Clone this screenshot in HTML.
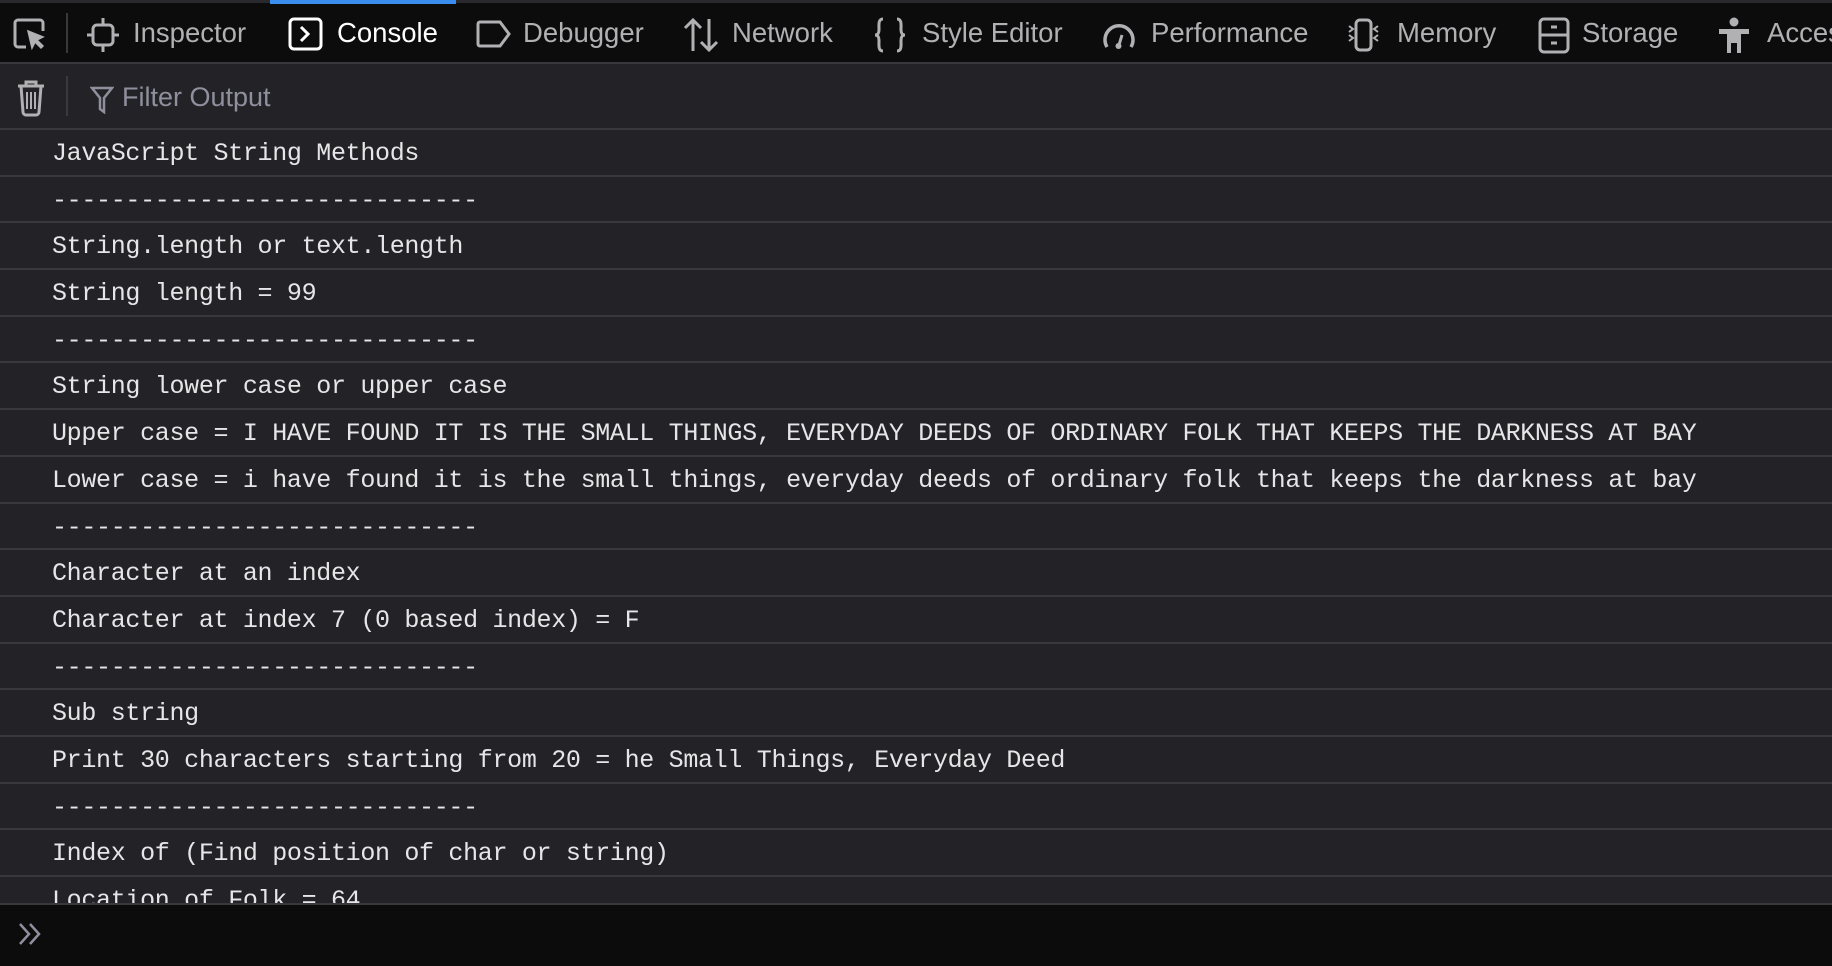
<!DOCTYPE html>
<html><head><meta charset="utf-8"><style>
*{margin:0;padding:0;box-sizing:border-box}
body{width:1832px;height:966px;background:#232327;overflow:hidden;position:relative;font-family:"Liberation Sans",sans-serif}
.tb{position:absolute;left:0;top:0;width:1832px;height:64px;background:#0c0c0d;border-top:3px solid #2a2a2e;border-bottom:2px solid #38383d}
.t{position:absolute;top:14px;font-size:27.5px;color:#b1b1b3;line-height:32px;white-space:nowrap}
.ic{position:absolute;top:14px}
.fb{position:absolute;left:0;top:64px;width:1832px;height:66px;background:#232327;border-bottom:2px solid #38383d}
.rows{position:absolute;left:0;top:130px;width:1832px}
.r{height:46.7px;border-bottom:2px solid #38383d;font-family:"Liberation Mono",monospace;font-size:25px;letter-spacing:-0.32px;color:#e6e6e8;padding-left:52px;padding-top:2px;line-height:44px;white-space:pre}
.inp{position:absolute;left:0;top:903px;width:1832px;height:63px;background:#0c0c0d;border-top:2px solid #38383d}
</style></head><body>
<div class="rows">
<div class="r">JavaScript String Methods</div>
<div class="r">-----------------------------</div>
<div class="r">String.length or text.length</div>
<div class="r">String length = 99</div>
<div class="r">-----------------------------</div>
<div class="r">String lower case or upper case</div>
<div class="r">Upper case = I HAVE FOUND IT IS THE SMALL THINGS, EVERYDAY DEEDS OF ORDINARY FOLK THAT KEEPS THE DARKNESS AT BAY</div>
<div class="r">Lower case = i have found it is the small things, everyday deeds of ordinary folk that keeps the darkness at bay</div>
<div class="r">-----------------------------</div>
<div class="r">Character at an index</div>
<div class="r">Character at index 7 (0 based index) = F</div>
<div class="r">-----------------------------</div>
<div class="r">Sub string</div>
<div class="r">Print 30 characters starting from 20 = he Small Things, Everyday Deed</div>
<div class="r">-----------------------------</div>
<div class="r">Index of (Find position of char or string)</div>
<div class="r">Location of Folk = 64</div>
</div>
<div class="tb">
<svg class="ic" style="left:12px" width="36" height="34" viewBox="0 0 36 34" fill="none" stroke="#b1b1b3" stroke-width="3"><path d="M14 30H6a3 3 0 0 1-3-3V6a3 3 0 0 1 3-3h22a3 3 0 0 1 3 3v8"/><path d="M16 14l4 17 3-6 6 6 2-2-6-6 6-3z" fill="#b1b1b3" stroke-width="1.5"/></svg>
<div style="position:absolute;left:66px;top:10px;width:2px;height:40px;background:#38383d"></div>
<svg class="ic" style="left:86px" width="34" height="36" viewBox="0 0 34 36" fill="none" stroke="#b1b1b3" stroke-width="3"><rect x="7" y="8" width="20" height="20" rx="4"/><path d="M17 1v7M17 28v7M1 18h6M27 18h6"/></svg>
<div class="t" style="left:133px">Inspector</div>
<div style="position:absolute;left:270px;top:-3px;width:186px;height:4px;background:#3a8ef0"></div>
<svg class="ic" style="left:288px" width="36" height="34" viewBox="0 0 36 34" fill="none" stroke="#fff" stroke-width="3"><rect x="2" y="2" width="31" height="30" rx="4"/><path d="M13 10l7 7-7 7"/></svg>
<div class="t" style="left:337px;color:#fff">Console</div>
<svg class="ic" style="left:474px" width="38" height="34" viewBox="0 0 38 34" fill="none" stroke="#b1b1b3" stroke-width="3"><path d="M4 7a2 2 0 0 1 2-2h20l9 12-9 12H6a2 2 0 0 1-2-2z"/></svg>
<div class="t" style="left:523px">Debugger</div>
<svg class="ic" style="left:683px" width="36" height="36" viewBox="0 0 36 36" fill="none" stroke="#b1b1b3" stroke-width="3"><path d="M10 34V3M2 11l8-8 8 8M26 2v31M18 25l8 8 8-8"/></svg>
<div class="t" style="left:732px">Network</div>
<svg class="ic" style="left:873px" width="34" height="36" viewBox="0 0 34 36" fill="none" stroke="#b1b1b3" stroke-width="3"><path d="M10 2C5 2 6 8 6 12s-1 6-4 6c3 0 4 2 4 6s-1 10 4 10M24 2c5 0 4 6 4 10s1 6 4 6c-3 0-4 2-4 6s1 10-4 10"/></svg>
<div class="t" style="left:922px">Style Editor</div>
<svg class="ic" style="left:1101px" width="36" height="36" viewBox="0 0 36 36" fill="none" stroke="#b1b1b3" stroke-width="3.5"><path d="M6 30A14 14 0 1 1 30 30"/><path d="M18 28l3-10" stroke-width="3"/><circle cx="17.5" cy="29" r="3" fill="#b1b1b3" stroke="none"/></svg>
<div class="t" style="left:1151px">Performance</div>
<svg class="ic" style="left:1346px" width="36" height="36" viewBox="0 0 36 36" fill="none" stroke="#b1b1b3" stroke-width="3"><rect x="10" y="3" width="15" height="30" rx="4"/><path d="M3 9l4 3-4 3M3 18l4 3-4 3M32 9l-4 3 4 3M32 18l-4 3 4 3" stroke-width="2"/></svg>
<div class="t" style="left:1397px">Memory</div>
<svg class="ic" style="left:1537px" width="34" height="38" viewBox="0 0 34 38" fill="none" stroke="#b1b1b3" stroke-width="3"><rect x="3" y="2" width="28" height="33" rx="4"/><path d="M3 18h28M14 10h6M14 26h6"/></svg>
<div class="t" style="left:1582px">Storage</div>
<svg class="ic" style="left:1717px" width="34" height="38" viewBox="0 0 34 38" fill="#b1b1b3"><circle cx="17" cy="5" r="4.5"/><rect x="2" y="12" width="30" height="5"/><rect x="10" y="12" width="14" height="14"/><rect x="10" y="24" width="4" height="12"/><rect x="20" y="24" width="4" height="12"/></svg>
<div class="t" style="left:1767px">Accessibility</div>
</div>
<div class="fb">
<svg style="position:absolute;left:15px;top:15px" width="32" height="38" viewBox="0 0 32 38" fill="none" stroke="#b1b1b3" stroke-width="3"><path d="M3 7h26M11 7V3h10v4M6 7l2 26a3 3 0 0 0 3 3h10a3 3 0 0 0 3-3l2-26"/><path d="M12 13v17M16 13v17M20 13v17" stroke-width="2"/></svg>
<div style="position:absolute;left:66px;top:12px;width:2px;height:40px;background:#38383d"></div>
<svg style="position:absolute;left:90px;top:22px" width="24" height="28" viewBox="0 0 24 28" fill="none" stroke="#8f8f9d" stroke-width="2.5"><path d="M2 2h20l-8 10v14l-4-3V12z"/></svg>
<div style="position:absolute;left:122px;top:17px;font-size:27px;color:#8f8f9d;line-height:32px">Filter Output</div>
</div>
<div class="inp">
<svg style="position:absolute;left:18px;top:16px" width="26" height="26" viewBox="0 0 26 26" fill="none" stroke="#8f8f9d" stroke-width="2.5"><path d="M2 3l9 10-9 10M12 3l9 10-9 10"/></svg>
</div>
</body></html>
